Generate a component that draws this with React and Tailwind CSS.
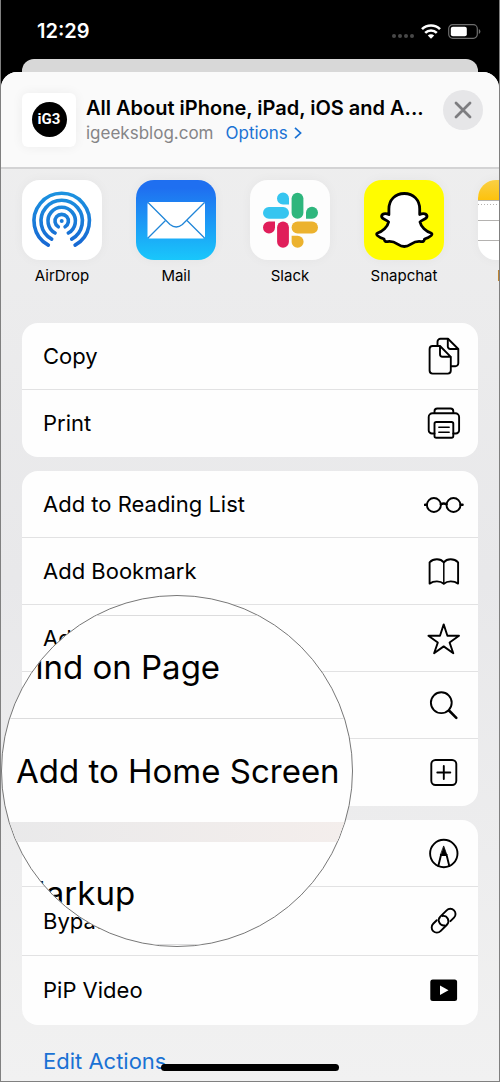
import { clsx } from "clsx";

const AirDropIcon = () => (
  <svg viewBox="0 0 80 80" className="size-20 bg-white" aria-hidden="true">
    <defs>
      <linearGradient id="airdrop" gradientUnits="userSpaceOnUse" x1="0" y1="12" x2="0" y2="68">
        <stop offset="0" stopColor="#1c93e0" />
        <stop offset="1" stopColor="#1766d2" />
      </linearGradient>
    </defs>
    <g fill="none" stroke="url(#airdrop)" strokeWidth="3.6" strokeLinecap="round">
      <path d="M26.3 65.2A27.7 27.7 0 1 1 53.1 65.2" />
      <path d="M29.7 59.1A20.7 20.7 0 1 1 49.7 59.1" />
      <path d="M33.1 53A13.7 13.7 0 1 1 46.3 53" />
      <path d="M36.3 46.8A6.7 6.7 0 1 1 43.1 46.8" />
    </g>
    <circle cx="39.7" cy="41" r="2" fill="#1a7cd8" />
  </svg>
);

const MailIcon = () => (
  <svg viewBox="0 0 80 80" className="size-20" aria-hidden="true">
    <defs>
      <linearGradient id="mail" x1="0" y1="0" x2="0" y2="1">
        <stop offset="0.1" stopColor="#1f6ff0" />
        <stop offset="1" stopColor="#19c7fb" />
      </linearGradient>
    </defs>
    <rect width="80" height="80" fill="url(#mail)" />
    <rect x="11.5" y="22" width="57.5" height="36.5" rx="2" fill="#fff" />
    <g fill="none" stroke="#2186d8" strokeWidth="1.3">
      <path d="M12 22.5L34 44.5Q40.2 49.5 46.4 44.5L68.5 22.5" />
      <path d="M12 58L29.5 40.5M68.5 58L51 40.5" />
    </g>
  </svg>
);

const SlackIcon = () => (
  <svg viewBox="0 0 80 80" className="size-20 bg-[#fdfdfd]" aria-hidden="true">
    <g fill="#36c5f0">
      <path d="M39 24.6H33A6 6 0 1 1 39 18.6Z" />
      <rect x="13" y="27" width="26" height="11.8" rx="5.9" />
    </g>
    <g fill="#2eb67d">
      <rect x="41.6" y="12.7" width="11.8" height="26.1" rx="5.9" />
      <path d="M56 38.8V32.8A6 6 0 1 1 62 38.8Z" />
    </g>
    <g fill="#e01e5a">
      <path d="M25 41.6V47.6A6 6 0 1 1 19 41.6Z" />
      <rect x="27.1" y="41.6" width="11.8" height="26.1" rx="5.9" />
    </g>
    <g fill="#ecb22e">
      <rect x="41.6" y="41.6" width="26.4" height="11.8" rx="5.9" />
      <path d="M41.6 55.8H47.6A6 6 0 1 1 41.6 61.8Z" />
    </g>
  </svg>
);

const SnapchatIcon = () => (
  <svg viewBox="0 0 80 80" className="size-20 bg-[#fffc00]" aria-hidden="true">
    <path
      d="M40.3 13.5C49.5 13.5 55.7 20 55.7 29V34.6C59.5 32.8 63 34 63 36.4C62.8 39.4 57.5 39.6 56 42C57 47 62 51.5 67 53C69.5 54 67 57 60.5 59C60.3 61.5 59 61.8 57 61.6C48 60.3 47 66.5 40.3 66.5C33.6 66.5 32.6 60.3 23.6 61.6C21.6 61.8 20.3 61.5 20.1 59C13.6 57 11.1 54 13.6 53C18.6 51.5 23.6 47 24.6 42C23.1 39.6 17.8 39.4 17.6 36.4C17.6 34 21.1 32.8 24.9 34.6V29C24.9 20 31.1 13.5 40.3 13.5Z"
      fill="#fff"
      stroke="#000"
      strokeWidth="2.8"
      strokeLinejoin="round"
    />
  </svg>
);

const NotesIcon = () => (
  <svg viewBox="0 0 80 80" className="size-20 bg-white" aria-hidden="true">
    <defs>
      <linearGradient id="notes" x1="0" y1="0" x2="0" y2="1">
        <stop offset="0" stopColor="#f9cf45" />
        <stop offset="1" stopColor="#fdc20c" />
      </linearGradient>
    </defs>
    <rect width="80" height="20" fill="url(#notes)" />
    <g stroke="#b4b2b0">
      <path d="M0 20.5H80M0 40.5H80M0 60.5H80" />
      <path d="M0 24.5H80" strokeDasharray="1 2" />
    </g>
  </svg>
);

// Line icons of the action rows, all on a 40px grid
const icons = {
  copy: (
    <>
      <path d="M13.5 10V5.8A3 3 0 0 1 16.5 2.8H24L34.3 13V27.3A3 3 0 0 1 31.3 30.3H27.5" />
      <path d="M23.8 3V10.5A2.5 2.5 0 0 0 26.3 13H34" />
      <path d="M15.8 10H8.6A3 3 0 0 0 5.6 13V34.6A3 3 0 0 0 8.6 37.6H23.8A3 3 0 0 0 26.8 34.6V20.8L16 10V18.3A2.5 2.5 0 0 0 18.5 20.8H26.8" />
    </>
  ),
  print: (
    <>
      <path d="M10.5 10V8.3A2.8 2.8 0 0 1 13.3 5.5H26.5A2.8 2.8 0 0 1 29.3 8.3V10" />
      <path d="M10.5 30.5H8A3.3 3.3 0 0 1 4.7 27.2V14A3.8 3.8 0 0 1 8.5 10.2H31.3A3.8 3.8 0 0 1 35.1 14V27.2A3.3 3.3 0 0 1 31.8 30.5H29.3" />
      <rect x="10.5" y="19" width="18.8" height="15.8" rx="1.8" />
      <path d="M14.8 24.3H25.2M14.8 29.3H25.2" strokeWidth="1.4" />
    </>
  ),
  glasses: (
    <>
      <circle cx="9.9" cy="21" r="7" />
      <circle cx="29.5" cy="21" r="7" />
      <path d="M16.8 20.3Q19.7 18.8 22.6 20.3M0.9 20.8H2.9M36.5 20.8H38.6" strokeWidth="2.4" />
    </>
  ),
  book: (
    <>
      <path d="M5.6 32.6V11.3C9.5 7.3 16.5 7.3 19.8 11.3C23.1 7.3 30.1 7.3 34.1 11.3V32.6C29.8 29.6 23.4 29.6 19.8 32.8C16.2 29.6 9.9 29.6 5.6 32.6Z" />
      <path d="M19.8 11.3V32.6" strokeWidth="1.5" />
    </>
  ),
  star: (
    <path d="M19.7 6.4L23.4 17.8H35L25.6 24.6L29.3 35.2L19.7 28.4L10.1 35.2L13.8 24.6L4.4 17.8H16Z" />
  ),
  search: (
    <>
      <circle cx="17.3" cy="17.7" r="10.4" />
      <path d="M25 25.5L32.3 32.8" strokeWidth="2.6" />
    </>
  ),
  plus: (
    <>
      <rect x="7.3" y="8" width="25" height="25" rx="4.2" />
      <path d="M19.8 14V27M13.3 20.5H26.3" />
    </>
  ),
  markup: (
    <>
      <circle cx="19.8" cy="20.5" r="13.7" />
      <path d="M17 22L14.3 33M22.6 22L25.3 33M16.8 22H22.8" />
      <path d="M19.8 13.3L22.9 22H16.7Z" fill="#000" strokeWidth="0.8" />
    </>
  ),
  link: (
    <g transform="translate(19.6 19.7) rotate(-45)">
      <path d="M-4.5 -5.2H-9.5A5.2 5.2 0 0 0 -9.5 5.2H-0.5A5.2 5.2 0 0 0 2.6 -4.1" />
      <path d="M4.5 5.2H9.5A5.2 5.2 0 0 0 9.5 -5.2H0.5A5.2 5.2 0 0 0 -2.6 4.1" />
    </g>
  ),
  pip: (
    <>
      <rect x="6.3" y="9.5" width="26.8" height="21.4" rx="2.5" fill="#000" stroke="none" />
      <path d="M16 15.5L24.5 20.2L16 24.9Z" fill="#fff" stroke="none" />
    </>
  ),
};

const apps = [
  { name: "AirDrop", icon: <AirDropIcon /> },
  { name: "Mail", icon: <MailIcon /> },
  { name: "Slack", icon: <SlackIcon /> },
  { name: "Snapchat", icon: <SnapchatIcon /> },
  { name: "Notes", icon: <NotesIcon /> },
];

const quickActions = [
  { label: "Copy", icon: "copy" },
  { label: "Print", icon: "print" },
];

const pageActions = [
  { label: "Add to Reading List", icon: "glasses" },
  { label: "Add Bookmark", icon: "book" },
  { label: "Add to Favorites", icon: "star" },
  { label: "Find on Page", icon: "search" },
  { label: "Add to Home Screen", icon: "plus" },
];

const moreActions = [
  { label: "Markup", icon: "markup" },
  { label: "Bypass", icon: "link", tall: true },
  { label: "PiP Video", icon: "pip", tall: true },
];

const ActionGroup = ({ actions }) => (
  <ul className="rounded-2xl bg-[#fefefe] overflow-hidden">
    {actions.map(({ label, icon, tall }) => (
      <li key={label} className="border-b border-[#e2e2e3] last:border-transparent">
        <button
          type="button"
          className={clsx(
            "w-full flex items-center justify-between pl-[21px] pr-[14px] text-[22px] leading-7",
            tall ? "h-[68px]" : "h-[66px]"
          )}
        >
          {label}
          <svg
            viewBox="0 0 40 40"
            className="size-10 shrink-0"
            fill="none"
            stroke="#000"
            strokeWidth="1.9"
            strokeLinecap="round"
            strokeLinejoin="round"
            aria-hidden="true"
          >
            {icons[icon]}
          </svg>
        </button>
      </li>
    ))}
  </ul>
);

const StatusBar = () => (
  <div className="h-[59px] pl-9 pr-[18px] pt-[3px] flex items-center justify-between text-white">
    <span className="text-xl font-semibold">12:29</span>
    <div className="flex items-center gap-[7px]">
      <div className="flex gap-[2px] pt-[10px]">
        {[0, 1, 2, 3].map((dot) => (
          <span key={dot} className="size-1 rounded-full bg-[#484848]" />
        ))}
      </div>
      {/* Wi-Fi */}
      <svg viewBox="0 0 20 15" className="w-5 h-[15px]" fill="none" stroke="#fff" strokeWidth="2.6">
        <path d="M1 5.2A12.8 12.8 0 0 1 19 5.2" />
        <path d="M4.2 8.9A8.3 8.3 0 0 1 15.8 8.9" />
        <path d="M10 14.8L6.8 11.6A4.6 4.6 0 0 1 13.2 11.6Z" fill="#fff" stroke="none" />
      </svg>
      {/* Battery */}
      <svg viewBox="0 0 33 15" className="w-[33px] h-[15px]">
        <rect x="0.7" y="0.7" width="28.6" height="13.6" rx="4" fill="none" stroke="#6e6e6e" strokeWidth="1.2" />
        <rect x="2.8" y="2.8" width="16" height="9.4" rx="2" fill="#fff" />
        <path d="M30.8 5V10Q32.4 9.2 32.4 7.5T30.8 5Z" fill="#6e6e6e" />
      </svg>
    </div>
  </div>
);

const SheetHeader = () => (
  <header className="h-[97px] pl-[21px] pr-4 flex items-center gap-[10px] bg-[#fafafa] border-b-2 border-[#d3d3d4]">
    <div className="size-[54px] shrink-0 rounded-md bg-white shadow-[0_0_12px_rgba(0,0,0,0.06)] flex items-center justify-center">
      <div className="size-[35px] rounded-full bg-black text-white flex items-center justify-center font-['Roboto',sans-serif] font-bold text-[15px] leading-none">
        iG3
      </div>
    </div>
    <div className="flex-1 min-w-0">
      <h1 className="text-xl leading-[26px] font-semibold truncate">
        All About iPhone, iPad, iOS and A...
      </h1>
      <div className="flex items-center gap-3 text-[17px] leading-6">
        <span className="text-[#858587]">igeeksblog.com</span>
        <a href="#options" className="flex items-center gap-[6px] text-[#1a72d4]">
          Options
          <svg viewBox="0 0 8 12" className="w-2 h-3" fill="none" stroke="currentColor" strokeWidth="1.7">
            <path d="M1 0.8L6.6 6L1 11.2" />
          </svg>
        </a>
      </div>
    </div>
    <button
      type="button"
      aria-label="Close"
      className="size-10 mb-5 shrink-0 rounded-full bg-[#e6e6e8] flex items-center justify-center"
    >
      <svg viewBox="0 0 18 18" className="size-[18px]" stroke="#7d7d80" strokeWidth="2.8" strokeLinecap="round">
        <path d="M2 2L16 16M16 2L2 16" />
      </svg>
    </button>
  </header>
);

// Round magnifier over the "Add to Home Screen" row
const Magnifier = () => (
  <div
    aria-hidden="true"
    className="absolute left-0 top-[595px] size-[352px] rounded-full overflow-hidden border border-[#777] bg-[#fefefe] text-[33px] leading-10"
  >
    <div className="h-5 border-b border-[#dcdcdd]" />
    <div className="h-[103px] pl-[14px] flex items-center border-b border-[#dcdcdd]">Find on Page</div>
    <div className="h-[103px] pl-[14px] flex items-center">Add to Home Screen</div>
    <div className="h-5 bg-linear-to-r from-[#e9e9ea] to-[#f4eeec]" />
    <div className="h-[103px] pl-[14px] flex items-center border-b border-[#dcdcdd]">Markup</div>
  </div>
);

export default function App() {
  return (
    <div className="relative min-h-screen flex flex-col overflow-hidden bg-black font-['Inter',sans-serif] text-black border-x border-b border-[#808080]">
      <StatusBar />
      <div className="h-[13px] mx-[21px] rounded-t-xl bg-[#d8d8d8]" />
      <main className="flex-1 rounded-t-2xl overflow-hidden bg-linear-to-b from-[#efefef] via-[#e8e8ea] to-[#f1f1f1]">
        <SheetHeader />

        <section className="flex gap-[34px] px-[21px] pt-[11px] overflow-hidden">
          {apps.map(({ name, icon }) => (
            <button key={name} type="button" className="w-20 shrink-0 flex flex-col items-center gap-[6px]">
              <span className="rounded-[18px] overflow-hidden shadow-[0_0_12px_rgba(0,0,0,0.04)]">{icon}</span>
              <span className="text-[15px] leading-5">{name}</span>
            </button>
          ))}
        </section>

        <div className="px-[21px] pt-[37px] flex flex-col gap-[14px]">
          <ActionGroup actions={quickActions} />
          <ActionGroup actions={pageActions} />
          <ActionGroup actions={moreActions} />
        </div>

        <a href="#edit" className="block px-[42px] pt-[22px] text-[22px] leading-7 text-[#1a72d4]">
          Edit Actions
        </a>
      </main>

      <Magnifier />
      {/* Home indicator */}
      <div className="absolute bottom-[10px] inset-x-[160px] h-[7px] rounded-full bg-black" />
    </div>
  );
}
